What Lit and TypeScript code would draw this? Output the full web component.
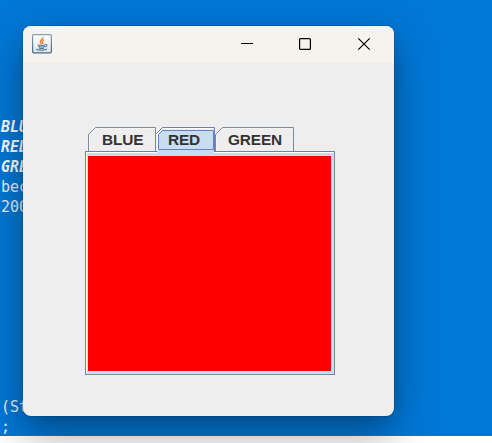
import { LitElement, html, css, svg } from "lit";
import { customElement, state } from "lit/decorators.js";
import { classMap } from "lit/directives/class-map.js";

@customElement("editor-text")
class EditorText extends LitElement {
  static styles = css`
    :host { display: block; width: 60px; color: #e8f2fc;
      font: 15px/20px "DejaVu Sans Mono", monospace; padding-top: 117px; }
    .line { height: 20px; padding-left: 1px; white-space: pre; }
    .strong { font-weight: bold; font-style: italic; color: #fff; }
    .gap { height: 180px; }
  `;
  render() {
    return html`
      <div class="line strong">BLU</div>
      <div class="line strong">RED</div>
      <div class="line strong">GRE</div>
      <div class="line">bec</div>
      <div class="line">200</div>
      <div class="gap"></div>
      <div class="line">(St</div>
      <div class="line">;</div>
    `;
  }
}

@customElement("title-bar")
class TitleBar extends LitElement {
  static styles = css`
    :host { display: flex; height: 37px; background: #f4f3ee; }
    .app { margin: 8px 0 0 9px; width: 20px; height: 20px; flex: none; }
    .buttons { margin-left: auto; display: flex; padding: 11px 23px 0 0; gap: 44px; }
    .close { margin-left: 1px; }
    svg { display: block; }
  `;
  render() {
    return html`
      <svg class="app" viewBox="0 0 20 20">
        <defs><linearGradient id="g" x1="0" y1="0" x2="0" y2="1">
          <stop offset="0" stop-color="#fff"/><stop offset="1" stop-color="#dfe3e6"/></linearGradient>
          <linearGradient id="b" x1="0" y1="0" x2="0" y2="1">
          <stop offset="0" stop-color="#83a0b7"/><stop offset="1" stop-color="#486880"/></linearGradient></defs>
        <rect x=".6" y=".6" width="18.8" height="18.3" rx="1.2" fill="url(#g)" stroke="url(#b)" stroke-width="1.2"/>
        <path d="M10.8 3.2c.5 2-3.2 2.8-2.4 5 .2.8.9 1.2 1.2 1.7M12 5.6c-2 .8-2.5 1.7-1.4 2.7.5.6.2 1.2-.4 1.7" fill="none" stroke="#ee8a3c" stroke-width="1.5"/>
        <path d="M5.6 10.7c2 .8 5.6.8 8 0M6.2 12.2c1.7.9 4.8.9 6.7 0M7 13.9c1.5.7 3.8.7 5.1 0M13.4 10.5c2.4-.3 1.9 2.1-.4 2.5M4.2 15.2c2.4 1.3 8.8 1.1 10.8-.2" fill="none" stroke="#567f9e" stroke-width="1.15"/>
      </svg>
      <div class="buttons">
        <svg width="14" height="14" viewBox="0 0 14 14"><path d="M1 6.5H13" stroke="#000"/></svg>
        <svg width="14" height="14" viewBox="0 0 14 14"><rect x="1.6" y="1.6" width="10.8" height="10.8" rx="1" fill="none" stroke="#000" stroke-width="1.2"/></svg>
        <svg class="close" width="14" height="14" viewBox="0 0 14 14"><path d="M1.3 1.3L12.7 12.7M12.7 1.3L1.3 12.7" stroke="#000" stroke-width="1.15"/></svg>
      </div>
    `;
  }
}

interface Tab { label: string; width: number; }

@customElement("tabbed-pane")
class TabbedPane extends LitElement {
  static styles = css`
    :host { display: block; width: 250px; }
    .tabs { display: flex; height: 24px; padding-left: 3px; position: relative; z-index: 1; }
    .tab { display: grid; height: 24px; flex: none; font: bold 15.4px/25px "Liberation Sans", Arial, sans-serif; letter-spacing: -.15px; color: #333; }
    .tab > * { grid-area: 1 / 1; }
    .tab svg { display: block; overflow: visible; }
    .label { padding-left: 13px; white-space: nowrap; z-index: 1; }
    .tab:first-child .label { padding-left: 14px; }
    .tab.selected .label { padding-left: 12px; }
    .pane { box-sizing: border-box; height: 224px; border: 1px solid #6382bf;
      border-right-color: #7a8a99; border-bottom-color: #7a8a99; background: #c8ddf2; }
    .inner { box-sizing: border-box; height: 222px; border-top: 1px solid #fff; border-left: 1px solid #fff; padding: 3px 3px 3px 1px; }
    .content { height: 215px; background: #f00; }
  `;
  @state() selected = 1;
  tabs: Tab[] = [
    { label: "BLUE", width: 68 },
    { label: "RED", width: 59 },
    { label: "GREEN", width: 79 },
  ];

  shape(w: number, on: boolean) {
    return on
      ? svg`<path d="M.5 24V7L7.5 .5H${w - 0.5}V24" fill="#eee"/>
          <path d="M1 23H${w - 1}V26H1Z" fill="#c8ddf2"/>
          <path d="M.5 6.5L6.5 .5H${w - 0.5}V24" fill="none" stroke="#6382bf"/>
          <path d="M1.5 24V7L7 1.5H${w - 1.5}" fill="none" stroke="#fff"/>
          <path d="M2.5 7.5L6.5 3.5H${w - 1.5}V22.5H2.5Z" fill="#c8ddf2" stroke="#6382bf"/>`
      : svg`<path d="M.5 24V7.5L7.5 .5H${w - 0.5}V24" fill="none" stroke="#7a8a99"/>
          <path d="M1.5 24V8L8 1.5H${w - 1}" fill="none" stroke="#f6f6f6" stroke-width=".7"/>`;
  }

  render() {
    return html`
      <div class="tabs">
        ${this.tabs.map((t, i) => html`
          <div class=${classMap({ tab: true, selected: i === this.selected })} @click=${() => (this.selected = i)}>
            <svg width=${t.width} height="24">${this.shape(t.width, i === this.selected)}</svg>
            <span class="label">${t.label}</span>
          </div>`)}
      </div>
      <div class="pane"><div class="inner"><div class="content"></div></div></div>
    `;
  }
}

@customElement("app-root")
class AppRoot extends LitElement {
  static styles = css`
    :host { display: block; position: relative; width: 492px; height: 443px; overflow: hidden;
      background: linear-gradient(#0078d7 436px, #fff 436px); }
    .window { position: absolute; left: 23px; top: 26px; width: 371px; height: 390px; border-radius: 8px;
      overflow: hidden; background: #eee;
      box-shadow: 0 0 0 1px rgba(0, 35, 70, .2), 0 16px 40px rgba(0, 0, 0, .38), 0 2px 14px rgba(0, 0, 0, .06); }
    .body { padding: 64px 0 0 62px; }
  `;
  render() {
    return html`
      <editor-text></editor-text>
      <div class="window">
        <title-bar></title-bar>
        <div class="body"><tabbed-pane></tabbed-pane></div>
      </div>
    `;
  }
}
